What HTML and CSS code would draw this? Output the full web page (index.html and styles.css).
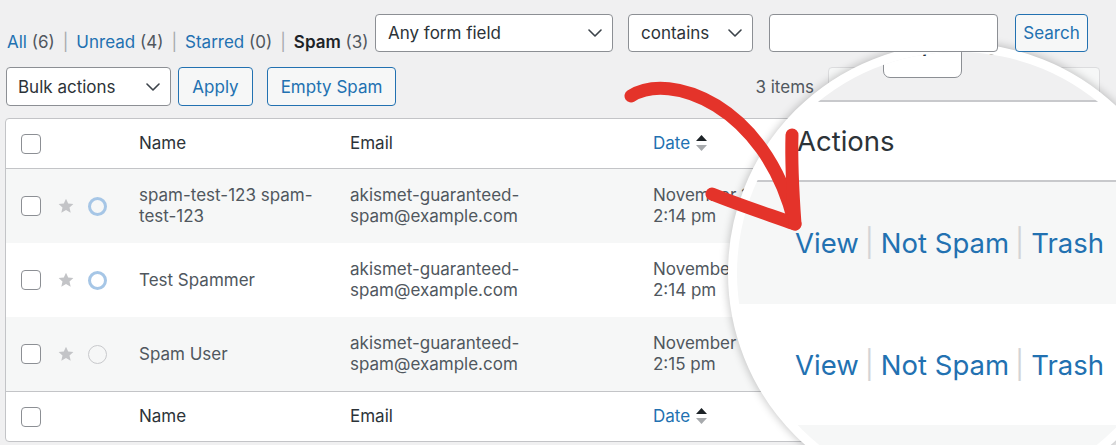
FILE: index.html
```html
<!DOCTYPE html>
<html>
<head>
<meta charset="utf-8">
<link rel="stylesheet" href="styles.css">
</head>
<body>
<div class="page">
  <div class="toprow">
    <ul class="views">
      <li><span class="link">All</span> <span class="count">(6)</span></li>
      <li class="sep">|</li>
      <li><span class="link">Unread</span> <span class="count">(4)</span></li>
      <li class="sep">|</li>
      <li><span class="link">Starred</span> <span class="count">(0)</span></li>
      <li class="sep">|</li>
      <li><span class="current">Spam</span> <span class="count">(3)</span></li>
    </ul>
    <div class="search">
      <div class="select s-field">Any form field<svg class="chev" viewBox="0 0 14 8"><polyline points="1,1 7,7 13,1"/></svg></div>
      <div class="select s-op">contains<svg class="chev" viewBox="0 0 14 8"><polyline points="1,1 7,7 13,1"/></svg></div>
      <div class="input s-text"></div>
      <div class="btn s-btn">Search</div>
    </div>
  </div>

  <div class="navrow">
    <div class="select s-bulk">Bulk actions<svg class="chev" viewBox="0 0 14 8"><polyline points="1,1 7,7 13,1"/></svg></div>
    <div class="btn b-apply">Apply</div>
    <div class="btn b-empty">Empty Spam</div>
    <div class="pagination">
      <span class="items">3 items</span>
      <span class="pbtn p-first"></span>
      <span class="pbtn p-prev"></span>
      <span class="pinput"></span>
      <span class="pof"></span>
      <span class="pbtn p-next"></span>
      <span class="pbtn p-last"></span>
    </div>
  </div>

  <div class="tablewrap">
    <table class="list">
      <colgroup>
        <col class="c-cb"><col class="c-name"><col class="c-email"><col class="c-date"><col class="c-act">
      </colgroup>
      <thead>
        <tr>
          <td class="cb"><span class="check"></span></td>
          <th>Name</th>
          <th>Email</th>
          <th class="sorted"><span class="sortlink">Date</span><svg class="sorticon" viewBox="0 0 11 17"><polygon class="up" points="0,6 5.5,0 11,6"/><polygon class="down" points="0,10 11,10 5.5,16"/></svg></th>
          <th class="c-actions"></th>
        </tr>
      </thead>
      <tbody>
        <tr class="alt">
          <td class="cb"><div class="cbwrap"><span class="check"></span><svg class="star" viewBox="0 0 16 16"><polygon points="8,0.8 10.2,5.6 15.4,6 11.5,9.5 12.7,14.7 8,12 3.3,14.7 4.5,9.5 0.6,6 5.8,5.6"/></svg><span class="dot unread"></span></div></td>
          <td>spam-test-123 spam-test-123</td>
          <td>akismet-guaranteed-spam@example.com</td>
          <td class="date">November 14, 2023 at<br>2:14 pm</td>
          <td class="acts"></td>
        </tr>
        <tr>
          <td class="cb"><div class="cbwrap"><span class="check"></span><svg class="star" viewBox="0 0 16 16"><polygon points="8,0.8 10.2,5.6 15.4,6 11.5,9.5 12.7,14.7 8,12 3.3,14.7 4.5,9.5 0.6,6 5.8,5.6"/></svg><span class="dot unread"></span></div></td>
          <td>Test Spammer</td>
          <td>akismet-guaranteed-spam@example.com</td>
          <td class="date">November 14, 2023 at<br>2:14 pm</td>
          <td class="acts"></td>
        </tr>
        <tr class="alt">
          <td class="cb"><div class="cbwrap"><span class="check"></span><svg class="star" viewBox="0 0 16 16"><polygon points="8,0.8 10.2,5.6 15.4,6 11.5,9.5 12.7,14.7 8,12 3.3,14.7 4.5,9.5 0.6,6 5.8,5.6"/></svg><span class="dot read"></span></div></td>
          <td>Spam User</td>
          <td>akismet-guaranteed-spam@example.com</td>
          <td class="date">November 14, 2023 at<br>2:15 pm</td>
          <td class="acts"></td>
        </tr>
      </tbody>
      <tfoot>
        <tr>
          <td class="cb"><span class="check"></span></td>
          <th>Name</th>
          <th>Email</th>
          <th class="sorted"><span class="sortlink">Date</span><svg class="sorticon" viewBox="0 0 11 17"><polygon class="up" points="0,6 5.5,0 11,6"/><polygon class="down" points="0,10 11,10 5.5,16"/></svg></th>
          <th class="c-actions"></th>
        </tr>
      </tfoot>
    </table>
  </div>
</div>

<div class="overlay">
  <div class="lens">
    <div class="lens-nav">
      <span class="lens-page">1</span>
      <span class="lens-of">of 1</span>
    </div>
    <div class="lens-head">Actions</div>
    <div class="lens-row alt"><span class="la">View</span><span class="lbar">|</span><span class="la">Not Spam</span><span class="lbar">|</span><span class="la">Trash</span></div>
    <div class="lens-row"><span class="la">View</span><span class="lbar">|</span><span class="la">Not Spam</span><span class="lbar">|</span><span class="la">Trash</span></div>
    <div class="lens-row alt last"></div>
  </div>

  <svg class="arrow" viewBox="0 0 1116 445">
    <g fill="none" stroke="#e4332a" stroke-width="13" stroke-linecap="round" stroke-linejoin="round">
      <path d="M631,96 C670,71 765,105 794,221"/>
      <path d="M712,194 C742,206 770,215 795,224"/>
      <path d="M792,135 C791,166 793,196 795,224"/>
    </g>
  </svg>
</div>
</body>
</html>
```

FILE: styles.css
```css
* { box-sizing: border-box; }
html, body { margin: 0; padding: 0; }
body {
  width: 1116px;
  height: 445px;
  overflow: hidden;
  position: relative;
  background: #f0f0f1;
  font-family: Inter, "Noto Sans", "Liberation Sans", sans-serif;
  font-size: 17px;
  color: #50575e;
}
.page { padding: 14px 28px 0 5px; }

/* top row */
.toprow { display: flex; align-items: flex-end; position: relative; z-index: 3; }
.views {
  display: flex;
  list-style: none;
  margin: 0 0 0 2px;
  padding: 0;
  line-height: 20px;
  white-space: nowrap;
}
.views .link { color: #2271b1; }
.views .count { color: #50575e; }
.views .current { color: #1d2327; font-weight: 600; }
.views .sep { color: #a7aaad; margin: 0 8px; }

.search { display: flex; margin-left: auto; }
.select {
  height: 38px;
  border: 1px solid #8c8f94;
  border-radius: 4px;
  background: #fff;
  color: #2c3338;
  display: flex;
  align-items: center;
  justify-content: space-between;
  padding: 0 10px 0 12px;
}
.chev { width: 14px; height: 8px; fill: none; stroke: #3c434a; stroke-width: 1.6; stroke-linecap: round; stroke-linejoin: round; }
.s-field { width: 238px; }
.s-op { width: 125px; margin-left: 15px; }
.input {
  height: 38px;
  border: 1px solid #8c8f94;
  border-radius: 4px;
  background: #fff;
}
.s-text { width: 229px; margin-left: 16px; }
.btn {
  height: 38px;
  border: 1px solid #2271b1;
  border-radius: 4px;
  background: #f6f7f7;
  color: #2271b1;
  display: flex;
  align-items: center;
  justify-content: center;
}
.s-btn { width: 73px; margin-left: 17px; }

/* nav row */
.navrow { display: flex; align-items: center; margin-top: 15px; margin-right: -12px; }
.navrow .select, .navrow .btn { height: 39px; }
.s-bulk { width: 165px; margin-left: 1px; padding-left: 11px; }
.b-apply { width: 75px; margin-left: 7px; }
.b-empty { width: 129px; margin-left: 14px; }
.pagination { display: flex; align-items: center; margin-left: auto; }
.items { margin-right: 14px; }
.pbtn, .pinput {
  height: 39px;
  width: 42px;
  border: 1px solid #dcdcde;
  border-radius: 4px;
  background: #f6f7f7;
}
.p-prev { margin-left: 5px; }
.pinput { margin-left: 5px; width: 40px; background: #fff; border-color: #8c8f94; }
.pof { width: 28px; margin: 0 5px 0 8px; }
.p-next { width: 40px; }
.p-last { width: 53px; margin-left: 4px; }

/* table */
.tablewrap {
  margin: 12px -18px 0 0;
  border: 1px solid #c3c4c7;
  border-radius: 4px;
  background: #fff;
  overflow: hidden;
}
.list { border-collapse: separate; border-spacing: 0; table-layout: fixed; width: 100%; }
.c-cb { width: 123px; }
.c-name { width: 211px; }
.c-email { width: 303px; }
.c-date { width: 197px; }
.list th, .list td { padding: 0 10px; text-align: left; vertical-align: middle; font-weight: 400; }
.list thead th, .list thead td, .list tfoot th, .list tfoot td {
  padding-top: 14px;
  padding-bottom: 14px;
  line-height: 21px;
  color: #2c3338;
}
.list thead th, .list thead td { border-bottom: 1px solid #c3c4c7; }
.list tfoot th, .list tfoot td { border-top: 1px solid #c3c4c7; }
.list tbody td { padding-top: 16px; padding-bottom: 16px; line-height: 21px; }
.list tbody tr.alt td { background: #f6f7f7; }
.list td.cb { padding-left: 15px; }
.check {
  display: block;
  width: 20px;
  height: 20px;
  border: 1px solid #8c8f94;
  border-radius: 4px;
  background: #fff;
}
.cbwrap { display: flex; align-items: center; }
.star { width: 16px; height: 16px; margin-left: 17px; fill: #c3c4c7; }
.dot { width: 19px; height: 19px; border-radius: 50%; margin-left: 14px; }
.dot.unread { border: 3px solid #a6c6e6; }
.dot.read { border: 1.5px solid #c8c9cc; }
.sorted { white-space: nowrap; }
.sortlink { color: #2271b1; }
.sorticon { width: 11px; height: 17px; margin-left: 6px; vertical-align: -3px; }
.sorticon .up { fill: #1d2327; }
.sorticon .down { fill: #a7aaad; }
.date { white-space: nowrap; }

/* magnifier overlay */
.overlay {
  position: absolute;
  left: 0;
  top: 0;
  width: 1116px;
  height: 445px;
  overflow: hidden;
  z-index: 2;
  pointer-events: none;
}
.lens {
  position: absolute;
  left: 728px;
  top: 43px;
  width: 460px;
  height: 460px;
  border: 9px solid #fff;
  border-radius: 50%;
  overflow: hidden;
  background: #fff;
  box-shadow: 0 0 9px 1px rgba(0, 0, 0, 0.22);
  font-size: 27.5px;
}
.lens-nav {
  box-sizing: content-box;
  height: 26px;
  padding-bottom: 22px;
  background: #f0f0f1;
  display: flex;
  align-items: flex-end;
  border-bottom: 2px solid #c8c9cc;
}
.lens-page {
  flex: none;
  margin-left: 146px;
  width: 79px;
  height: 63px;
  line-height: 61px;
  border: 1.5px solid #8c8f94;
  border-radius: 7px;
  background: #fff;
  color: #2c3338;
  text-align: center;
}
.lens-of { flex: none; height: 63px; line-height: 61px; margin-left: 23px; color: #2c3338; }
.lens-head {
  height: 80px;
  line-height: 78px;
  padding-left: 60px;
  color: #2c3338;
  border-bottom: 2px solid #c8c9cc;
}
.lens-row {
  height: 121px;
  display: flex;
  align-items: center;
  padding-left: 58px;
  color: #2271b1;
}
.lens-row.alt { background: #f6f7f7; height: 122px; }
.lens-row.last { height: 200px; }
.lbar { color: #d3d4d6; margin: 0 7px 0 6px; }

.arrow {
  position: absolute;
  left: 0;
  top: 0;
  width: 1116px;
  height: 445px;
}
```
